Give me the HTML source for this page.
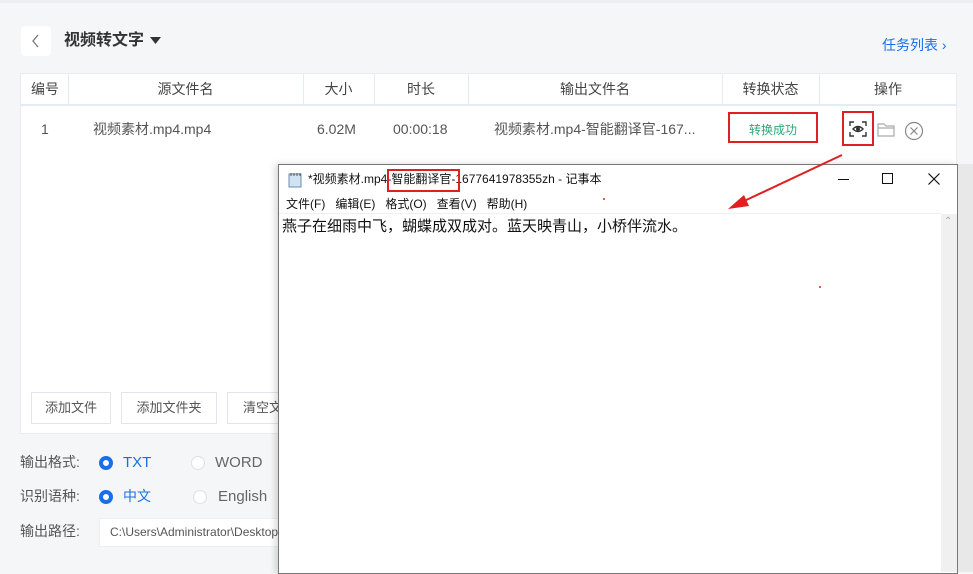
<!DOCTYPE html>
<html><head><meta charset="utf-8"><style>
*{margin:0;padding:0;box-sizing:border-box}
body{width:973px;height:572px;overflow:hidden;background:#f5f6f8;font-family:"Liberation Sans","Noto Sans CJK SC",sans-serif;position:relative;color:#333;line-height:1.2}
.a{position:absolute}
.c{text-align:center}
.hd{font-size:14px;color:#444;top:81px}
.cell{font-size:14px;color:#555;top:121px}
.btn{position:absolute;top:392px;height:32px;border:1px solid #e3e5ea;background:#fff;font-size:13px;color:#555;text-align:center;line-height:30px}
.lbl{font-size:14px;color:#555}
.radio{position:absolute;width:14px;height:14px;border-radius:50%}
.on{border:4px solid #1a6fe8;background:#fff}
.off{border:1px solid #dde0e5;background:#fff}
.vl{position:absolute;top:73px;height:33px;width:1px;background:#e6eaf2}
</style></head><body>
<div class="a" style="left:0;top:0;width:973px;height:3px;background:#eceef1"></div>
<div class="a" style="left:21px;top:26px;width:30px;height:30px;background:#fff;border-radius:4px"></div>
<svg class="a" style="left:30px;top:34px" width="12" height="14" viewBox="0 0 12 14" fill="none" stroke="#777" stroke-width="1.3"><path d="M8 1L3 7l5 6"/></svg>
<div class="a" style="left:64px;top:31px;font-size:16px;font-weight:bold;color:#333">视频转文字</div>
<svg class="a" style="left:150px;top:37px" width="11" height="8" viewBox="0 0 11 8"><path d="M0 0h11L5.5 7z" fill="#333"/></svg>
<div class="a" style="left:882px;top:37px;font-size:14px;color:#1a6fe8">任务列表 &#8250;</div>

<div class="a" style="left:20px;top:73px;width:937px;height:361px;background:#fff;border:1px solid #e8ebf0"></div>
<div class="a" style="left:20px;top:73px;width:937px;height:33px;border-bottom:2px solid #e3ebf6"></div>
<div class="vl" style="left:68px"></div><div class="vl" style="left:303px"></div><div class="vl" style="left:374px"></div><div class="vl" style="left:468px"></div><div class="vl" style="left:722px"></div><div class="vl" style="left:819px"></div>
<div class="a hd" style="left:31px">编号</div>
<div class="a hd c" style="left:68px;width:235px">源文件名</div>
<div class="a hd c" style="left:303px;width:71px">大小</div>
<div class="a hd c" style="left:374px;width:94px">时长</div>
<div class="a hd c" style="left:468px;width:254px">输出文件名</div>
<div class="a hd c" style="left:722px;width:97px">转换状态</div>
<div class="a hd c" style="left:819px;width:138px">操作</div>
<div class="a cell" style="left:41px">1</div>
<div class="a cell" style="left:93px">视频素材.mp4.mp4</div>
<div class="a cell" style="left:317px">6.02M</div>
<div class="a cell" style="left:393px">00:00:18</div>
<div class="a cell" style="left:494px">视频素材.mp4-智能翻译官-167...</div>
<div class="a" style="left:728px;top:112px;width:90px;height:31px;border:2px solid #e02020;font-size:12px;color:#2aa876;text-align:center;line-height:33px">转换成功</div>
<div class="a" style="left:842px;top:111px;width:32px;height:35px;border:2px solid #e02020"></div>
<svg class="a" style="left:849px;top:121px" width="18" height="16" viewBox="0 0 18 16" fill="none" stroke="#333" stroke-width="1.4"><path d="M1 5V1h4M13 1h4v4M17 11v4h-4M5 15H1v-4"/><path d="M4 8q5-5 10 0q-5 5-10 0z"/><circle cx="9" cy="8" r="1.3" fill="#333"/></svg>
<svg class="a" style="left:877px;top:122px" width="18" height="15" viewBox="0 0 18 15" fill="none" stroke="#aaa" stroke-width="1.2"><path d="M1 2h6l2 2h8v10H1z M1 6h16"/></svg>
<svg class="a" style="left:904px;top:121px" width="20" height="20" viewBox="0 0 20 20" fill="none" stroke="#888" stroke-width="1.2"><circle cx="10" cy="10" r="8.5"/><path d="M6.5 6.5l7 7M13.5 6.5l-7 7"/></svg>

<div class="btn" style="left:31px;width:80px">添加文件</div>
<div class="btn" style="left:121px;width:96px">添加文件夹</div>
<div class="btn" style="left:227px;width:60px;text-align:left;padding-left:15px">清空文</div>

<div class="a lbl" style="left:20px;top:454px">输出格式:</div>
<div class="radio on" style="left:99px;top:456px"></div>
<div class="a" style="left:123px;top:454px;font-size:15px;color:#1a6fe8">TXT</div>
<div class="radio off" style="left:191px;top:456px"></div>
<div class="a" style="left:215px;top:454px;font-size:15px;color:#666">WORD</div>
<div class="a lbl" style="left:20px;top:488px">识别语种:</div>
<div class="radio on" style="left:99px;top:490px"></div>
<div class="a" style="left:123px;top:488px;font-size:14px;color:#1a6fe8">中文</div>
<div class="radio off" style="left:193px;top:490px"></div>
<div class="a" style="left:218px;top:488px;font-size:15px;color:#666">English</div>
<div class="a lbl" style="left:20px;top:523px">输出路径:</div>
<div class="a" style="left:99px;top:518px;width:190px;height:29px;background:#fff;border:1px solid #eceef1;font-size:12px;color:#555;line-height:27px;padding-left:10px;white-space:nowrap;overflow:hidden">C:\Users\Administrator\Desktop</div>

<!-- notepad -->
<div class="a" style="left:278px;top:164px;width:680px;height:410px;background:#fff;border:1px solid #777;box-shadow:-3px 0 6px rgba(0,0,0,.15)"></div>
<div class="a" style="left:958px;top:164px;width:15px;height:408px;background:#e8e8e8"></div>
<svg class="a" style="left:288px;top:172px" width="14" height="16" viewBox="0 0 14 16"><rect x="1" y="2" width="12" height="13" fill="#cfe3f2" stroke="#6a8fb0"/><path d="M3 1v3M6 1v3M9 1v3M12 1v3" stroke="#555"/></svg>
<div class="a" style="left:308px;top:172px;font-size:12px;color:#111;white-space:nowrap">*视频素材.mp4-智能翻译官-1677641978355zh - 记事本</div>
<div class="a" style="left:387px;top:169px;width:73px;height:23px;border:2px solid #e02020"></div>
<div class="a" style="left:838px;top:179px;width:11px;height:1px;background:#111"></div>
<div class="a" style="left:882px;top:173px;width:11px;height:11px;border:1px solid #111"></div>
<svg class="a" style="left:928px;top:173px" width="12" height="12" viewBox="0 0 12 12" stroke="#111" stroke-width="1.2"><path d="M0.5 0.5l11 11M11.5 0.5l-11 11"/></svg>
<div class="a" style="left:286px;top:197px;font-size:12px;color:#111">文件(F)&nbsp;&nbsp;&nbsp;编辑(E)&nbsp;&nbsp;&nbsp;格式(O)&nbsp;&nbsp;&nbsp;查看(V)&nbsp;&nbsp;&nbsp;帮助(H)</div>
<div class="a" style="left:279px;top:213px;width:662px;height:1px;background:#f0f0f0"></div>
<div class="a" style="left:941px;top:214px;width:16px;height:358px;background:#f0f0f0"></div>
<div class="a" style="left:944px;top:216px;font-size:10px;color:#aaa">&#8963;</div>
<div class="a" style="left:282px;top:218px;font-size:15px;color:#111;white-space:nowrap">燕子在细雨中飞，蝴蝶成双成对。蓝天映青山，小桥伴流水。</div>
<svg class="a" style="left:0;top:0" width="973" height="572"><line x1="842" y1="155" x2="742" y2="202" stroke="#e02020" stroke-width="2"/><polygon points="728,209 744,195 749,206" fill="#e02020"/><circle cx="604" cy="199" r="1" fill="#e02020"/><circle cx="820" cy="287" r="1" fill="#e02020"/></svg>
</body></html>
